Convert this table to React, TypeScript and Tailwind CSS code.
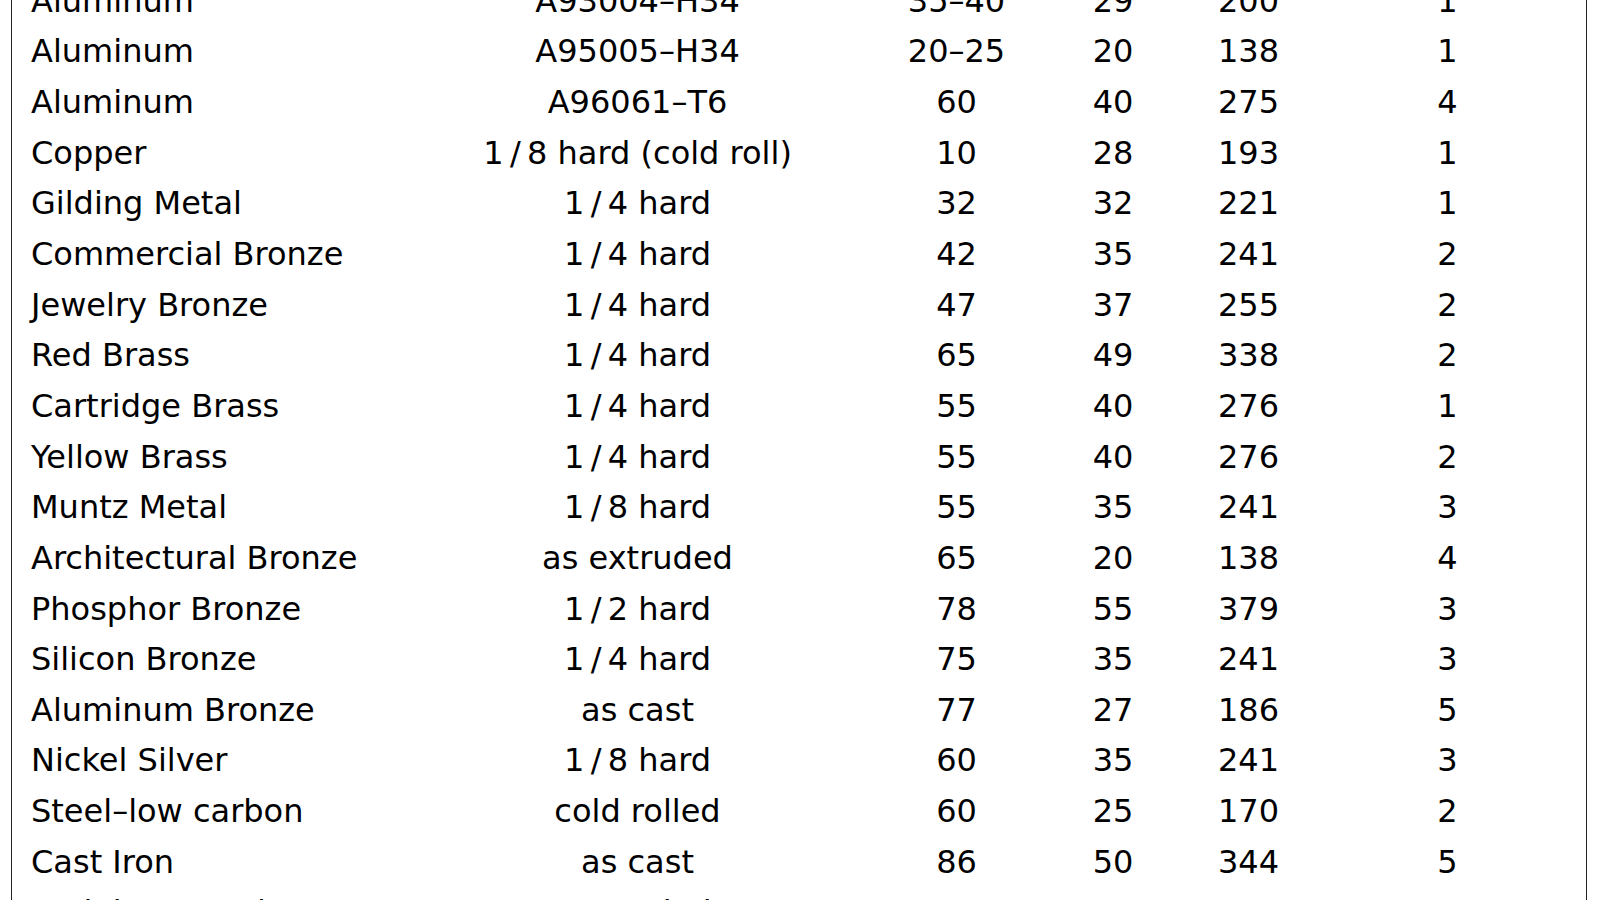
const rows: [string, string, string, string, string, string][] = [
  ['Aluminum', 'A93004-H34', '35-40', '29', '200', '1'],
  ['Aluminum', 'A95005-H34', '20-25', '20', '138', '1'],
  ['Aluminum', 'A96061-T6', '60', '40', '275', '4'],
  ['Copper', '1/8 hard (cold roll)', '10', '28', '193', '1'],
  ['Gilding Metal', '1/4 hard', '32', '32', '221', '1'],
  ['Commercial Bronze', '1/4 hard', '42', '35', '241', '2'],
  ['Jewelry Bronze', '1/4 hard', '47', '37', '255', '2'],
  ['Red Brass', '1/4 hard', '65', '49', '338', '2'],
  ['Cartridge Brass', '1/4 hard', '55', '40', '276', '1'],
  ['Yellow Brass', '1/4 hard', '55', '40', '276', '2'],
  ['Muntz Metal', '1/8 hard', '55', '35', '241', '3'],
  ['Architectural Bronze', 'as extruded', '65', '20', '138', '4'],
  ['Phosphor Bronze', '1/2 hard', '78', '55', '379', '3'],
  ['Silicon Bronze', '1/4 hard', '75', '35', '241', '3'],
  ['Aluminum Bronze', 'as cast', '77', '27', '186', '5'],
  ['Nickel Silver', '1/8 hard', '60', '35', '241', '3'],
  ['Steel-low carbon', 'cold rolled', '60', '25', '170', '2'],
  ['Cast Iron', 'as cast', '86', '50', '344', '5'],
  ['Stainless Steel 304', 'annealed', '90', '30', '207', '2'],
];

function fmt(s: string) {
  return s.replace(/\//g, '\u2009/\u2009').replace(/-/g, '\u2013');
}

export default function App() {
  return (
    <div className="h-screen w-full overflow-hidden bg-white text-black" style={{ fontFamily: '"DejaVu Sans", sans-serif' }}>
      <div className="ml-[11px] w-[1576px] h-[960px] border-x border-[#222] -mt-[24.5px]">
        {rows.map((r, i) => (
          <div
            key={i}
            className="grid h-[50.65px] grid-cols-[425px_401px_237px_76px_195px_203px] items-center text-[32px] leading-none"
          >
            <div className="pl-[19px] whitespace-nowrap">{fmt(r[0])}</div>
            <div className="text-center whitespace-nowrap">{fmt(r[1])}</div>
            <div className="text-center">{fmt(r[2])}</div>
            <div className="text-center">{r[3]}</div>
            <div className="text-center">{r[4]}</div>
            <div className="text-center">{r[5]}</div>
          </div>
        ))}
      </div>
    </div>
  );
}
